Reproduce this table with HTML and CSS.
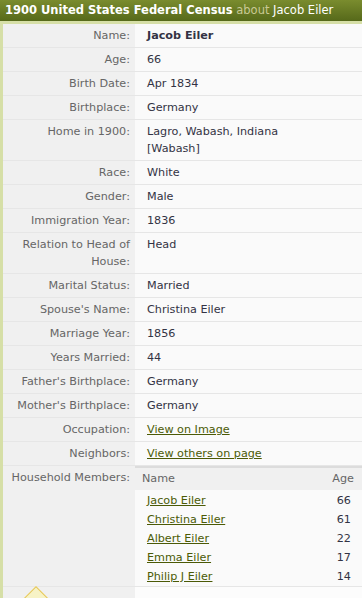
FILE: index.html
```html
<!DOCTYPE html>
<html>
<head>
<meta charset="utf-8">
<link rel="stylesheet" href="styles.css">
</head>
<body>
<div class="panel">
  <div class="title"><b>1900 United States Federal Census</b> <span class="about">about</span> Jacob Eiler</div>
  <div class="frame">
    <table class="rec">
      <tr><th>Name:</th><td class="strong">Jacob Eiler</td></tr>
      <tr><th>Age:</th><td>66</td></tr>
      <tr><th>Birth Date:</th><td>Apr 1834</td></tr>
      <tr><th>Birthplace:</th><td>Germany</td></tr>
      <tr><th>Home in 1900:</th><td>Lagro, Wabash, Indiana<br>[Wabash]</td></tr>
      <tr><th>Race:</th><td>White</td></tr>
      <tr><th>Gender:</th><td>Male</td></tr>
      <tr><th>Immigration Year:</th><td>1836</td></tr>
      <tr><th>Relation to Head of House:</th><td>Head</td></tr>
      <tr><th>Marital Status:</th><td>Married</td></tr>
      <tr><th>Spouse's Name:</th><td>Christina Eiler</td></tr>
      <tr><th>Marriage Year:</th><td>1856</td></tr>
      <tr><th>Years Married:</th><td>44</td></tr>
      <tr><th>Father's Birthplace:</th><td>Germany</td></tr>
      <tr><th>Mother's Birthplace:</th><td>Germany</td></tr>
      <tr><th>Occupation:</th><td><a href="#">View on Image</a></td></tr>
      <tr><th>Neighbors:</th><td><a href="#">View others on page</a></td></tr>
      <tr class="hh">
        <th>Household Members:</th>
        <td class="nest">
          <table class="members">
            <tr class="mh"><th class="mn">Name</th><th class="ma">Age</th></tr>
            <tr class="first"><td class="mn"><a href="#">Jacob Eiler</a></td><td class="ma">66</td></tr>
            <tr><td class="mn"><a href="#">Christina Eiler</a></td><td class="ma">61</td></tr>
            <tr><td class="mn"><a href="#">Albert Eiler</a></td><td class="ma">22</td></tr>
            <tr><td class="mn"><a href="#">Emma Eiler</a></td><td class="ma">17</td></tr>
            <tr class="last"><td class="mn"><a href="#">Philip J Eiler</a></td><td class="ma">14</td></tr>
          </table>
        </td>
      </tr>
      <tr class="tail"><th><span class="tip"></span></th><td></td></tr>
    </table>
  </div>
</div>
</body>
</html>
```
FILE: styles.css
```css
html, body {
  margin: 0;
  padding: 0;
  background: #ffffff;
}
body {
  font-family: "DejaVu Sans", Verdana, sans-serif;
  font-size: 11.2px;
  color: #333333;
  overflow: hidden;
}
.title {
  height: 21px;
  line-height: 21px;
  padding-left: 5px;
  background: linear-gradient(#7a8c2e, #56691a);
  color: #ffffff;
  font-size: 11.5px;
  white-space: nowrap;
  overflow: hidden;
}
.title b {
  font-weight: bold;
}
.about {
  color: #c9c995;
}
.frame {
  background: #d6dfa7;
  padding: 3px 0 0 3px;
}
.rec {
  width: 100%;
  border-collapse: collapse;
  background: #fafafa;
}
.rec > tbody > tr > th,
.rec > tbody > tr > td {
  line-height: 17px;
  padding: 3px 0 3px 0;
  border-bottom: 1px solid #e6e6e6;
  vertical-align: top;
}
.rec > tbody > tr > th {
  width: 127px;
  padding-right: 5px;
  background: #f0f0f0;
  color: #666666;
  font-weight: normal;
  text-align: right;
}
.rec > tbody > tr > td {
  padding-left: 12px;
  color: #333344;
}
.rec td.strong {
  font-weight: bold;
}
a {
  color: #4b5a06;
  text-decoration: underline;
}
.rec > tbody > tr > td.nest {
  padding: 0;
}
.members {
  width: 100%;
  border-collapse: collapse;
}
.members th,
.members td {
  line-height: 17px;
  height: 17px;
  padding: 1px 0;
}
.members .mh th {
  background: #f0f0f0;
  border-top: 2px solid #dcdcdc;
  color: #666666;
  font-weight: normal;
  padding: 2px 0 3px;
}
.members .mh th.mn {
  text-align: left;
  padding-left: 7px;
}
.members .mh th.ma {
  text-align: right;
  padding-right: 8px;
}
.members td.mn {
  padding-left: 12px;
}
.members td.ma {
  text-align: right;
  padding-right: 11px;
}
.members tr.first td {
  padding-top: 2px;
}
.rec tr.tail th,
.rec tr.tail td {
  height: 40px;
  border-bottom: none;
  position: relative;
}
.rec tr.tail td {
  background: #fcfcfc;
}
.tip {
  position: absolute;
  left: 21px;
  top: 4px;
  width: 22px;
  height: 22px;
  background: #f7f3c6;
  border: 1px solid #e6c65a;
  transform: rotate(45deg);
}
```
